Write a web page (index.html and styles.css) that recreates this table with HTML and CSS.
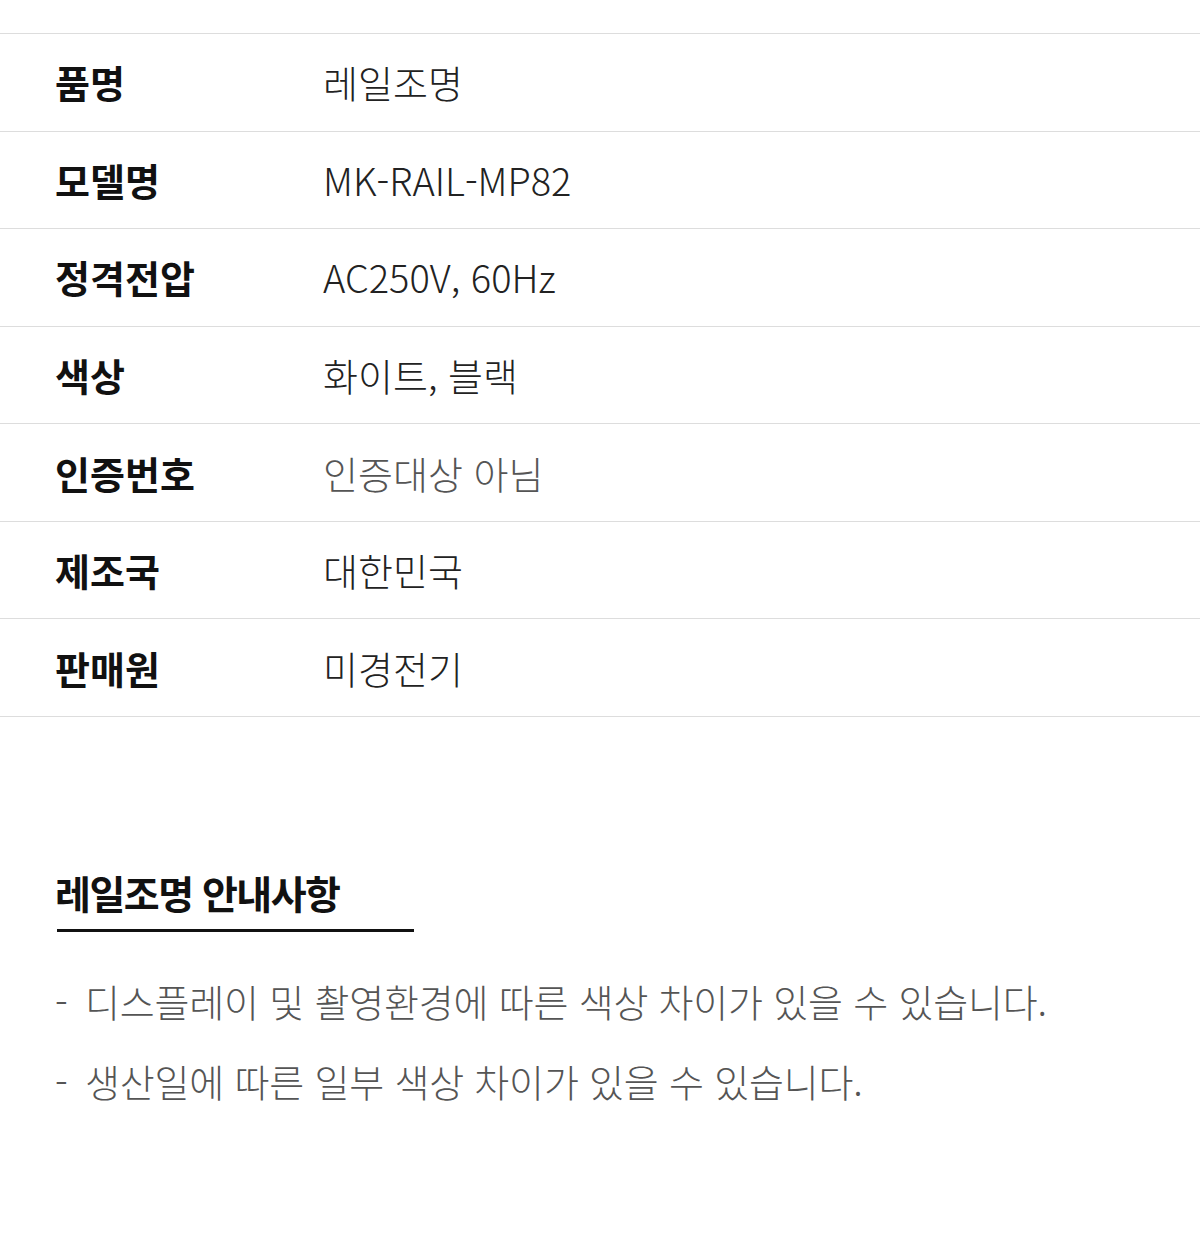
FILE: index.html
```html
<!DOCTYPE html>
<html lang="ko">
<head>
    <meta charset="UTF-8">
    <meta name="viewport" content="width=device-width, initial-scale=1.0">
    <title>레일조명 상품정보</title>
    <link rel="stylesheet" href="styles.css">
</head>
<body>
    <table class="spec-table">
        <tr>
            <th>품명</th>
            <td>레일조명</td>
        </tr>
        <tr>
            <th>모델명</th>
            <td>MK-RAIL-MP82</td>
        </tr>
        <tr>
            <th>정격전압</th>
            <td>AC250V, 60Hz</td>
        </tr>
        <tr>
            <th>색상</th>
            <td>화이트, 블랙</td>
        </tr>
        <tr>
            <th>인증번호</th>
            <td class="muted">인증대상 아님</td>
        </tr>
        <tr>
            <th>제조국</th>
            <td>대한민국</td>
        </tr>
        <tr>
            <th>판매원</th>
            <td>미경전기</td>
        </tr>
    </table>

    <div class="notice">
        <h2>레일조명 안내사항</h2>
        <ul>
            <li>디스플레이 및 촬영환경에 따른 색상 차이가 있을 수 있습니다.</li>
            <li>생산일에 따른 일부 색상 차이가 있을 수 있습니다.</li>
        </ul>
    </div>
</body>
</html>
```

FILE: styles.css
```css
body {
    margin: 0;
    padding-top: 33px;
    font-family: "Noto Sans CJK KR", "Noto Sans", sans-serif;
    color: #111;
    background: #fff;
}

.spec-table {
    width: 100%;
    border-collapse: collapse;
    border-top: 1px solid #ddd;
}

.spec-table tr {
    border-bottom: 1px solid #ddd;
}

.spec-table th,
.spec-table td {
    height: 96.57px;
    padding: 0;
    font-size: 38px;
    line-height: 1;
    vertical-align: middle;
    text-align: left;
}

.spec-table th {
    width: 268px;
    padding-left: 55px;
    font-weight: 700;
    color: #111;
}

.spec-table td {
    font-weight: 300;
    color: #222;
}

.spec-table td.muted {
    color: #555;
}

.notice {
    padding: 152px 55px 0;
}

.notice h2 {
    margin: 0;
    font-size: 39px;
    font-weight: 700;
    line-height: 1.2;
    letter-spacing: -1.5px;
}

.notice h2::after {
    content: "";
    display: block;
    width: 357px;
    height: 3px;
    margin: 13px 0 0 2px;
    background: #111;
}

.notice ul {
    margin: 29px 0 0;
    padding: 0;
    list-style: none;
}

.notice li {
    position: relative;
    padding-left: 30px;
    font-size: 38px;
    font-weight: 300;
    line-height: 80px;
    letter-spacing: -0.2px;
    color: #555;
}

.notice li::before {
    content: "-";
    position: absolute;
    left: 0;
}
```
